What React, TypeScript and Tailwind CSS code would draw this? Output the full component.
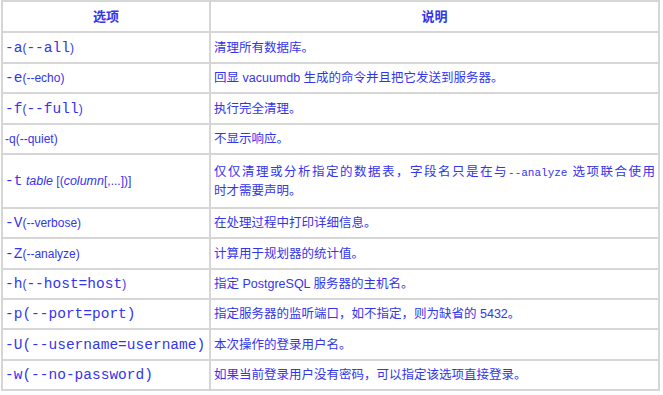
import React from 'react';

// mono / sans fragments used in the option column
const M = ({ children }: { children: React.ReactNode }) => (
  <span className="font-['Liberation_Mono',monospace] text-[14.5px]">{children}</span>
);
const S = ({ children }: { children: React.ReactNode }) => (
  <span className="font-['Liberation_Sans',sans-serif] text-[12px]">{children}</span>
);
const I = ({ children }: { children: React.ReactNode }) => (
  <span className="font-['Liberation_Sans',sans-serif] text-[12.5px] italic">{children}</span>
);

interface Row {
  h: string;
  opt: React.ReactNode;
  desc: React.ReactNode;
}

const rows: Row[] = [
  { h: 'h-[31px]', opt: <><M>-a</M><S>(</S><M>--all</M><S>)</S></>, desc: '清理所有数据库。' },
  { h: 'h-[30px]', opt: <><M>-e</M><S>(--echo)</S></>, desc: '回显 vacuumdb 生成的命令并且把它发送到服务器。' },
  { h: 'h-[31px]', opt: <><M>-f</M><S>(</S><M>--full</M><S>)</S></>, desc: '执行完全清理。' },
  { h: 'h-[30px]', opt: <S>-q(--quiet)</S>, desc: '不显示响应。' },
  {
    h: 'h-[54px]',
    opt: <><M>-t</M> <I>table</I><S> [(</S><I>column</I><S>[,...])]</S></>,
    desc: (
      <>
        <div className="[text-align-last:justify]">
          仅仅清理或分析指定的数据表，字段名只是在与<span className="font-['Liberation_Mono',monospace] text-[11px]">--analyze</span> 选项联合使用
        </div>
        <div>时才需要声明。</div>
      </>
    ),
  },
  { h: 'h-[30px]', opt: <><M>-V</M><S>(--verbose)</S></>, desc: '在处理过程中打印详细信息。' },
  { h: 'h-[31px]', opt: <><M>-Z</M><S>(--analyze)</S></>, desc: '计算用于规划器的统计值。' },
  { h: 'h-[30px]', opt: <><M>-h</M><S>(</S><M>--host=host</M><S>)</S></>, desc: '指定 PostgreSQL 服务器的主机名。' },
  { h: 'h-[30px]', opt: <M>-p(--port=port)</M>, desc: '指定服务器的监听端口，如不指定，则为缺省的 5432。' },
  { h: 'h-[31px]', opt: <M>-U(--username=username)</M>, desc: '本次操作的登录用户名。' },
  { h: 'h-[30px]', opt: <M>-w(--no-password)</M>, desc: '如果当前登录用户没有密码，可以指定该选项直接登录。' },
];

export default function App() {
  return (
    <div className="w-[663px] h-[395px] bg-white pl-px text-[#3434ec]">
      <div className="w-[659px] border-2 border-[#d6d6d6] font-['Liberation_Sans','Noto_Sans_CJK_SC',sans-serif] text-[12.5px] leading-[18px]">
        {/* header */}
        <div className="flex h-[29px]">
          <div className="w-[206px] flex items-center justify-center font-bold text-[13px]">选项</div>
          <div className="flex-1 flex items-center justify-center border-l-2 border-[#d6d6d6] font-bold text-[13px]">说明</div>
        </div>

        {rows.map((r, i) => (
          <div key={i} className={`flex border-t-2 border-[#d6d6d6] ${r.h}`}>
            <div className="w-[206px] flex items-center pl-[2px] whitespace-nowrap">
              <div>{r.opt}</div>
            </div>
            <div className="flex-1 flex items-center border-l-2 border-[#d6d6d6] pl-[3px] pr-[3px]">
              <div className="w-full">{r.desc}</div>
            </div>
          </div>
        ))}
      </div>
    </div>
  );
}
